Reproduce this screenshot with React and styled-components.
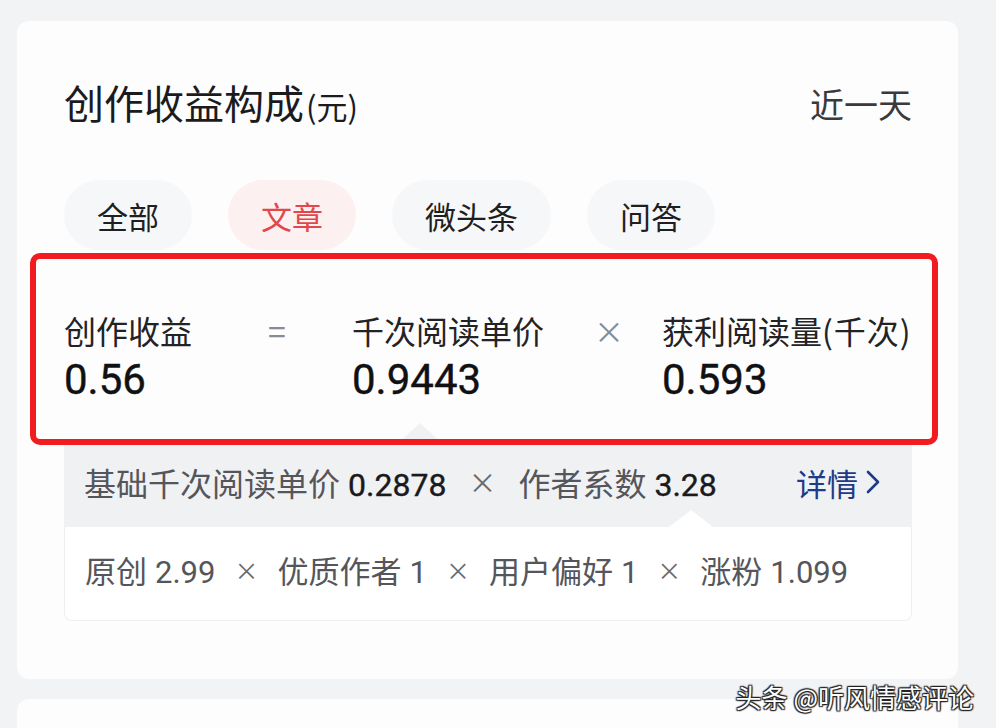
import styled, { createGlobalStyle } from "styled-components";

const GlobalStyle = createGlobalStyle`
  html, body {
    margin: 0;
    padding: 0;
    background: #f2f3f5;
  }
  body {
    font-family: "Noto Sans CJK SC", "Noto Sans", sans-serif;
    color: #1c1c1e;
  }
`;

const Page = styled.div`
  position: relative;
  height: 728px;
  overflow: hidden;
  padding: 21px 38px 0 17px;
  box-sizing: border-box;
  display: flex;
  flex-direction: column;
  gap: 20px;
`;

const Card = styled.section`
  background: #fdfdfe;
  border-radius: 12px;
  padding: ${(p) => (p.$empty ? "0" : "59px 46px 58px 47px")};
  min-height: ${(p) => (p.$empty ? "120px" : "auto")};
  display: flex;
  flex-direction: column;
`;

const Header = styled.div`
  display: flex;
  align-items: center;
  justify-content: space-between;
  height: 48px;
`;

const Title = styled.h2`
  margin: 0;
  font-size: 40px;
  font-weight: 400;
  line-height: 48px;
  color: #1b1b1d;

  small {
    font-size: 31px;
    margin-left: 2px;
  }
`;

const Range = styled.span`
  font-size: 34px;
  color: #3a3a3c;
  line-height: 48px;
`;

const Tabs = styled.div`
  display: flex;
  gap: 36px;
  margin-top: 52px;
`;

const Tab = styled.button`
  height: 70px;
  padding: 0 33px;
  border: none;
  border-radius: 35px;
  font-family: inherit;
  font-size: 31px;
  background: ${(p) => (p.$active ? "#fdf0f0" : "#f6f7f9")};
  color: ${(p) => (p.$active ? "#e2474c" : "#1f1f22")};
`;

const Highlight = styled.div`
  position: relative;
  z-index: 1;
  margin: 3px -26px 0 -34px;
  border: 6px solid #f01c1f;
  border-radius: 10px;
  padding: 51px 0 35px 28px;
  display: grid;
  grid-template-columns: 204px 84px 242px 68px 1fr;
`;

const Metric = styled.div`
  display: flex;
  flex-direction: column;
  gap: 6px;
`;

const MetricLabel = styled.span`
  font-size: 32px;
  line-height: 40px;
  color: #232326;
  white-space: nowrap;

  small {
    font-size: 32px;
    letter-spacing: 1px;
  }
`;

const MetricValue = styled.span`
  font-family: Roboto, "Noto Sans CJK SC", sans-serif;
  font-size: 42px;
  font-weight: 400;
  line-height: 48px;
  color: #111113;
  -webkit-text-stroke: 0.4px #111113;
`;

const Operator = styled.span`
  font-size: ${(p) => (p.$eq ? "32px" : "30px")};
  line-height: 40px;
  color: #8a8b90;
`;

const Detail = styled.div`
  position: relative;
  display: flex;
  flex-direction: column;
`;

const BaseRow = styled.div`
  position: relative;
  height: 82px;
  box-sizing: border-box;
  background: #f0f1f3;
  display: flex;
  align-items: center;
  padding: 0 32px 8px 20px;
  font-size: 32px;

  &::before {
    content: "";
    position: absolute;
    left: 332px;
    top: -22px;
    border-left: 24px solid transparent;
    border-right: 24px solid transparent;
    border-bottom: 22px solid #f0f1f3;
  }
`;

const FactorRow = styled.div`
  position: relative;
  height: 94px;
  box-sizing: border-box;
  background: #ffffff;
  border: 1px solid #eceef1;
  border-top: none;
  border-radius: 0 0 8px 8px;
  display: flex;
  align-items: center;
  padding: 0 20px 8px;
  font-size: 31px;

  &::before {
    content: "";
    position: absolute;
    left: 604px;
    top: -17px;
    border-left: 22px solid transparent;
    border-right: 22px solid transparent;
    border-bottom: 17px solid #ffffff;
  }
`;

const Factor = styled.span`
  display: inline-flex;
  align-items: baseline;
  gap: 8px;
  color: #55565b;
  white-space: nowrap;
`;

const Num = styled.span`
  font-family: Roboto, "Noto Sans CJK SC", sans-serif;
  color: ${(p) => (p.$strong ? "#1a1a1d" : "#55565b")};
  -webkit-text-stroke: ${(p) => (p.$strong ? "0.4px #1a1a1d" : "0")};
`;

const Times = styled.span`
  margin: 0 ${(p) => (p.$big ? 22 : 19)}px;
  color: #6a6b70;
  font-size: ${(p) => (p.$big ? 28 : 24)}px;
`;

const MoreLink = styled.a`
  margin-left: auto;
  display: inline-flex;
  align-items: center;
  gap: 8px;
  color: #1d3b86;
  font-size: 31px;
  text-decoration: none;
`;

const Watermark = styled.div`
  position: absolute;
  right: 22px;
  top: 680px;
  font-size: 26px;
  line-height: 34px;
  color: #ffffff;
  text-shadow: 0 0 2px #222, 1px 1px 1px #222, -1px -1px 1px #222, 1px -1px 1px #222, -1px 1px 1px #222;
`;

export default function App() {
  const tabs = ["全部", "文章", "微头条", "问答"];

  return (
    <>
      <GlobalStyle />
      <Page>
        <Card>
          <Header>
            <Title>
              创作收益构成<small>(元)</small>
            </Title>
            <Range>近一天</Range>
          </Header>

          <Tabs>
            {tabs.map((t) => (
              <Tab key={t} $active={t === "文章"}>
                {t}
              </Tab>
            ))}
          </Tabs>

          <Highlight>
            <Metric>
              <MetricLabel>创作收益</MetricLabel>
              <MetricValue>0.56</MetricValue>
            </Metric>
            <Operator $eq>=</Operator>
            <Metric>
              <MetricLabel>千次阅读单价</MetricLabel>
              <MetricValue>0.9443</MetricValue>
            </Metric>
            <Operator>×</Operator>
            <Metric>
              <MetricLabel>
                获利阅读量<small>(千次)</small>
              </MetricLabel>
              <MetricValue>0.593</MetricValue>
            </Metric>
          </Highlight>

          <Detail>
            <BaseRow>
              <Factor>
                基础千次阅读单价<Num $strong>0.2878</Num>
              </Factor>
              <Times $big>×</Times>
              <Factor>
                作者系数<Num $strong>3.28</Num>
              </Factor>
              <MoreLink href="#">
                详情
                <svg width="14" height="24" viewBox="0 0 14 24" fill="none">
                  <path
                    d="M2 2l10 10-10 10"
                    stroke="#1d3b86"
                    strokeWidth="2.6"
                    strokeLinecap="round"
                    strokeLinejoin="round"
                  />
                </svg>
              </MoreLink>
            </BaseRow>
            <FactorRow>
              <Factor>
                原创<Num>2.99</Num>
              </Factor>
              <Times>×</Times>
              <Factor>
                优质作者<Num>1</Num>
              </Factor>
              <Times>×</Times>
              <Factor>
                用户偏好<Num>1</Num>
              </Factor>
              <Times>×</Times>
              <Factor>
                涨粉<Num>1.099</Num>
              </Factor>
            </FactorRow>
          </Detail>
        </Card>
        <Card $empty />
        <Watermark>头条 @听风情感评论</Watermark>
      </Page>
    </>
  );
}
